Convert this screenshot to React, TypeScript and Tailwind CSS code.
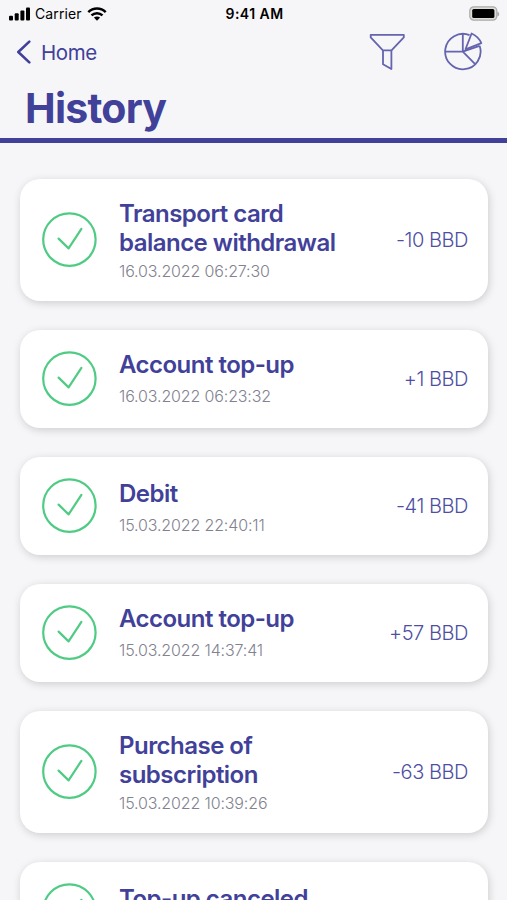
type Entry = {
  lines: string[];
  date: string;
  amount: string;
  card: string;
  text: string;
};

const tall = 'h-[122px]';
const short = 'h-[98px]';

const entries: Entry[] = [
  { lines: ['Transport card', 'balance withdrawal'], date: '16.03.2022 06:27:30', amount: '-10 BBD', card: tall, text: 'pt-[20px]' },
  { lines: ['Account top-up'], date: '16.03.2022 06:23:32', amount: '+1 BBD', card: short, text: 'pt-[20px]' },
  { lines: ['Debit'], date: '15.03.2022 22:40:11', amount: '-41 BBD', card: short, text: 'pt-[22px]' },
  { lines: ['Account top-up'], date: '15.03.2022 14:37:41', amount: '+57 BBD', card: short, text: 'pt-[20px]' },
  { lines: ['Purchase of', 'subscription'], date: '15.03.2022 10:39:26', amount: '-63 BBD', card: tall, text: 'pt-[20px]' },
  { lines: ['Top-up canceled'], date: '', amount: '', card: short, text: 'pt-[22px]' },
];

function StatusBar() {
  return (
    <div className="flex h-[28px] items-center justify-between pl-[9px] pr-[7px] text-black">
      <div className="flex w-[160px] items-center">
        <svg width="22" height="14" viewBox="0 0 22 14" fill="currentColor">
          <rect x="0" y="8.8" width="4" height="4.7" rx="1" />
          <rect x="5.7" y="6.3" width="4" height="7.2" rx="1" />
          <rect x="11.4" y="3.6" width="4" height="9.9" rx="1" />
          <rect x="17" y="0.6" width="4" height="12.9" rx="1" />
        </svg>
        <span className="ml-[4px] w-[47px] whitespace-nowrap text-[14px] leading-[20px] tracking-[0.1px]">Carrier</span>
        <svg className="ml-[5px]" width="20" height="14" viewBox="0 0 20 14" fill="none" stroke="currentColor" strokeWidth="2.5">
          <path d="M1.3 5.1C6.2.2 13.8.2 18.7 5.1" />
          <path d="M4.5 8.4C7.6 5.4 12.4 5.4 15.5 8.4" />
          <path d="M10 13.7L6.9 10.6C8.6 9 11.4 9 13.1 10.6Z" fill="currentColor" stroke="none" />
        </svg>
      </div>
      <span className="whitespace-nowrap text-[14px] font-semibold leading-[20px] tracking-[0.45px]">9:41 AM</span>
      <div className="flex w-[160px] justify-end">
        <svg width="31" height="16" viewBox="0 0 31 16">
          <path d="M28.3 5.4Q30.3 6 30.3 8T28.3 10.6Z" fill="#aaa" />
          <rect x="0.8" y="0.8" width="27" height="13.4" rx="4" fill="#deded8" stroke="#aaa" strokeWidth="1.2" />
          <rect x="3.2" y="2.9" width="22.2" height="9.2" rx="1.6" fill="#000" />
        </svg>
      </div>
    </div>
  );
}

function Header() {
  return (
    <header className="h-[143px] border-b-[5px] border-[#41419a]">
      <StatusBar />
      <div className="flex h-[48px] items-center justify-between pl-[16px] pr-[24px]">
        <button className="flex items-center text-[#41419a]">
          <svg width="16" height="24" viewBox="0 0 16 24" fill="none" stroke="currentColor" strokeWidth="2.6" strokeLinecap="round" strokeLinejoin="round">
            <path d="M13.3 1.6L2.3 12L13.3 22.4" />
          </svg>
          <span className="ml-[9px] pt-[1px] text-[20.5px] leading-[28px] tracking-[-0.4px]">Home</span>
        </button>
        <div className="flex items-center gap-[37px] text-[#6464af]">
          <svg width="38" height="40" viewBox="0 0 38 40" fill="none" stroke="currentColor" strokeWidth="1.8" strokeLinejoin="round">
            <path d="M2.7 2.8H35.8V5.4L23.5 18.4H14.9L2.7 5.4Z" />
            <path d="M15 18.4V32.2L23.4 37V18.4" />
          </svg>
          <svg width="40" height="40" viewBox="0 0 40 40" fill="none" stroke="currentColor" strokeWidth="1.8" strokeLinejoin="round">
            <path d="M26.6 3.2A17.7 17.7 0 1 0 36.6 13.8" />
            <path d="M19.8 2V19.6H2.2M19.8 19.6L31.9 31.8M19.8 19.6L36.6 13.8" />
            <path d="M22.5 17.3L28.6 1.5Q35.8 4.8 38.3 11.2Z" />
          </svg>
        </div>
      </div>
      <h1 className="pl-[25px] pt-[7px] text-[41px] font-bold leading-[50px] tracking-[-0.75px] text-[#41419a]">History</h1>
    </header>
  );
}

function Card({ entry }: { entry: Entry }) {
  return (
    <li className={`flex shrink-0 rounded-[20px] bg-white pl-[21px] pr-[20px] shadow-[1px_2px_8px_rgba(0,0,0,0.17)] ${entry.card}`}>
      <svg className="shrink-0 self-center" width="56" height="56" viewBox="0 0 56 56" fill="none" stroke="#4fcb84" strokeWidth="2.2" strokeLinecap="round" strokeLinejoin="round">
        <circle cx="28.4" cy="27.6" r="26.2" />
        <path d="M17.6 26.6L27.6 36.4L40.4 16.8" />
      </svg>
      <div className={`ml-[22px] grow ${entry.text}`}>
        <h2 className="whitespace-nowrap text-[24px] font-semibold leading-[29px] tracking-[-0.52px] text-[#41419a]">
          {entry.lines.map((line) => (
            <span key={line} className="block">{line}</span>
          ))}
        </h2>
        {entry.date && (
          <p className={`whitespace-nowrap text-[16px] font-light leading-[20px] tracking-[-0.14px] text-[#82828f] ${entry.lines.length > 1 ? 'pt-[4px]' : 'pt-[7px]'}`}>{entry.date}</p>
        )}
      </div>
      <span className="self-center whitespace-nowrap text-[20px] font-light tracking-[-0.45px] text-[#4e4ea2]">{entry.amount}</span>
    </li>
  );
}

export default function App() {
  return (
    <main className="h-[900px] w-[507px] overflow-hidden bg-[#f6f6f9] font-['Inter',sans-serif]">
      <Header />
      <ul className="flex flex-col gap-[29.2px] pl-[20px] pr-[19px] pt-[35.5px]">
        {entries.map((entry, i) => (
          <Card key={i} entry={entry} />
        ))}
      </ul>
    </main>
  );
}
